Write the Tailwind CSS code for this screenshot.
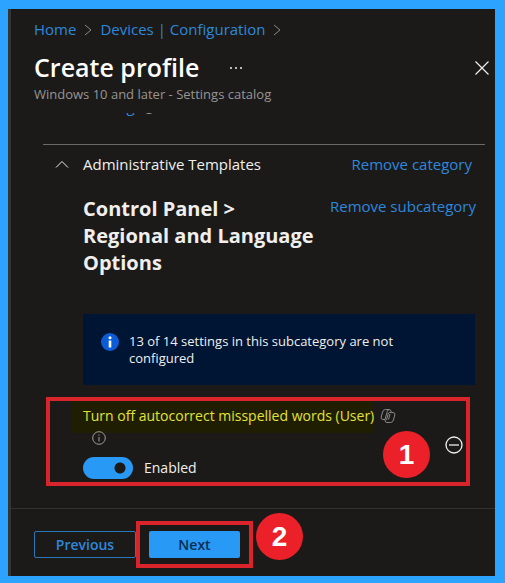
<!DOCTYPE html>
<html lang="en">
  <head>
    <meta charset="UTF-8" />
    <meta name="viewport" content="width=device-width, initial-scale=1" />
    <title>Create profile</title>
    <script src="https://cdn.jsdelivr.net/npm/@tailwindcss/browser@4"></script>
  </head>
  <body
    class="min-h-screen flex bg-[#2ba3ff] pt-[9px] pr-[10px] pb-[7px] pl-2 font-['Segoe_UI','Open_Sans',sans-serif] text-sm text-[#f0efed]"
  >
    <div class="flex-1 flex flex-col bg-[#1b1a19] border-l-3 border-[#343434]">
      <!-- Header -->
      <header class="pl-[23px] pr-[5px] pt-[11px]">
        <nav aria-label="Breadcrumb" class="flex items-center gap-2 h-5 text-[15px] text-[#2d88dc]">
          <a href="#">Home</a>
          <svg class="w-2 h-3 text-[#8a8886]" viewBox="0 0 8 12" fill="none" stroke="currentColor"><path d="M1 1l6 5-6 5" /></svg>
          <a href="#">Devices | Configuration</a>
          <svg class="w-2 h-3 text-[#8a8886]" viewBox="0 0 8 12" fill="none" stroke="currentColor"><path d="M1 1l6 5-6 5" /></svg>
        </nav>
        <div class="flex items-center mt-3 h-8">
          <h1 class="text-[25px] font-semibold text-white">Create profile</h1>
          <button aria-label="More" class="ml-7 p-0.5">
            <svg class="w-3.5 h-2" viewBox="0 0 14 8" fill="currentColor"><circle cx="2" cy="4" r="1" /><circle cx="7" cy="4" r="1" /><circle cx="12" cy="4" r="1" /></svg>
          </button>
          <button aria-label="Close" class="ml-auto">
            <svg class="w-4 h-4" viewBox="0 0 16 16" fill="none" stroke="currentColor" stroke-width="1.2"><path d="M1.5 1.5l13 13M14.5 1.5l-13 13" /></svg>
          </button>
        </div>
        <p class="h-5 leading-5 text-[13px] text-[#979593]">Windows 10 and later - Settings catalog</p>
      </header>

      <!-- Settings, scrolled under the header -->
      <main class="flex-1 mt-[9px] pl-8 pr-[10px] overflow-hidden">
        <div class="flex items-end h-8 -mt-[29px] text-[15px] text-[#2d88dc]">
          <a href="#" class="leading-5">+ Add settings</a>
          <svg class="w-3.5 h-3.5 mb-px text-[#a19f9d]" viewBox="0 0 14 14" fill="none" stroke="currentColor"><circle cx="7" cy="6.5" r="6" /></svg>
        </div>
        <section class="mt-7 border-t border-[#6b6a68] pt-2">
          <div class="flex items-center pl-3 pr-[13px] text-[15px] leading-[22px]">
            <button aria-label="Collapse" class="mr-3.5">
              <svg class="w-3.5 h-2" viewBox="0 0 14 8" fill="none" stroke="currentColor"><path d="M1 7.5l6-6 6 6" /></svg>
            </button>
            <h2>Administrative Templates</h2>
            <a href="#" class="ml-auto text-[#2d88dc]">Remove category</a>
          </div>
          <div class="flex justify-between items-start gap-4 mt-5 pl-10 pr-[9px]">
            <h3 class="text-xl leading-[27px] font-bold">Control Panel &gt; Regional and Language Options</h3>
            <a href="#" class="shrink-0 text-[15px] leading-[22px] text-[#2d88dc]">Remove subcategory</a>
          </div>
          <div class="flex gap-2.5 mt-[38px] ml-10 mr-[10px] pl-[18px] pr-12 pt-[19px] pb-[18px] bg-[#001433]">
            <svg class="shrink-0 w-[18px] h-[18px]" viewBox="0 0 18 18"><circle cx="9" cy="9" r="9" fill="#0b5cd6" /><circle cx="9" cy="4.8" r="1.5" fill="#fff" /><path d="M7.7 7.5h2.6v7H7.7z" fill="#fff" /></svg>
            <p class="text-[13px] leading-[17px]">13 of 14 settings in this subcategory are not configured</p>
          </div>
        </section>

        <!-- Setting, step 1 -->
        <section class="relative flex items-center mt-3 ml-[3px] mr-[15px] pl-[21px] pr-[3px] border-4 border-[#d9242b]">
          <div class="flex-1 pb-[3px]">
            <div class="flex items-start gap-1.5">
              <label for="autocorrect" class="pl-3 pt-[5px] pb-[7px] leading-5 bg-[#1f1e02] text-[#e3e336]">Turn off autocorrect misspelled words (User)</label>
              <svg class="w-4 h-4 mt-[7px] text-[#8a8886]" viewBox="0 0 16 16" fill="none" stroke="currentColor"><path d="M5 11.5H3Q.6 11.5 1.200 9L2.600 4Q3.300 1.500 5.500 1.500H9Q10.500 1.500 11 3L11.300 4.500H13Q15.400 4.500 14.800 7L13.400 12Q12.700 14.500 10.500 14.500H7Q5.500 14.500 5.200 13L5 11.500M11.300 4.500H9.500Q8.500 4.500 8 6.500L6.500 12M9 1.500Q7.800 1.500 7.300 3.500L5 11.500M8.500 11.500L10 6" /></svg>
            </div>
            <button aria-label="Setting details" class="block ml-[21px] -mt-0.5">
              <svg class="w-3.5 h-3.5 text-[#a19f9d]" viewBox="0 0 14 14" fill="none" stroke="currentColor"><circle cx="7" cy="7" r="6.3" /><path d="M7 6v4.5M7 3.5v1.2" /></svg>
            </button>
            <div class="flex items-center gap-[11px] mt-3 pl-3">
              <input id="autocorrect" type="checkbox" role="switch" checked class="appearance-none w-[50px] h-[22px] rounded-full bg-[#2899f5] bg-[radial-gradient(circle_at_37px_11px,#1b1a19_5px,transparent_6px)]" />
              <span>Enabled</span>
            </div>
          </div>
          <button aria-label="Remove setting" class="mt-1.5">
            <svg class="w-[18px] h-[18px]" viewBox="0 0 18 18" fill="none" stroke="currentColor" stroke-width="1.3"><circle cx="9" cy="9" r="8" /><path d="M4 9h10" /></svg>
          </button>
          <span class="absolute right-9 bottom-1 flex items-center justify-center size-[47px] rounded-full bg-[#ec2028] text-white text-[28px] font-bold font-['Liberation_Sans',sans-serif]">1</span>
        </section>
      </main>

      <!-- Footer, step 2 -->
      <footer class="flex items-center mt-[21px] pt-3 pb-2 pl-[23px] border-t border-[#32312f] font-semibold">
        <button class="w-[102px] h-[27px] rounded-xs border border-[#2b78b8] text-[#2d88dc]">Previous</button>
        <div class="relative px-[9px] py-1.5 border-4 border-[#d9242b]">
          <button class="block w-[91px] h-[27px] rounded-xs bg-[#2899f5] text-[#0b2f52]">Next</button>
          <span class="absolute -right-[54px] -top-3 flex items-center justify-center size-[47px] rounded-full bg-[#ec2028] text-white text-[28px] font-bold font-['Liberation_Sans',sans-serif]">2</span>
        </div>
      </footer>
    </div>
  </body>
</html>
